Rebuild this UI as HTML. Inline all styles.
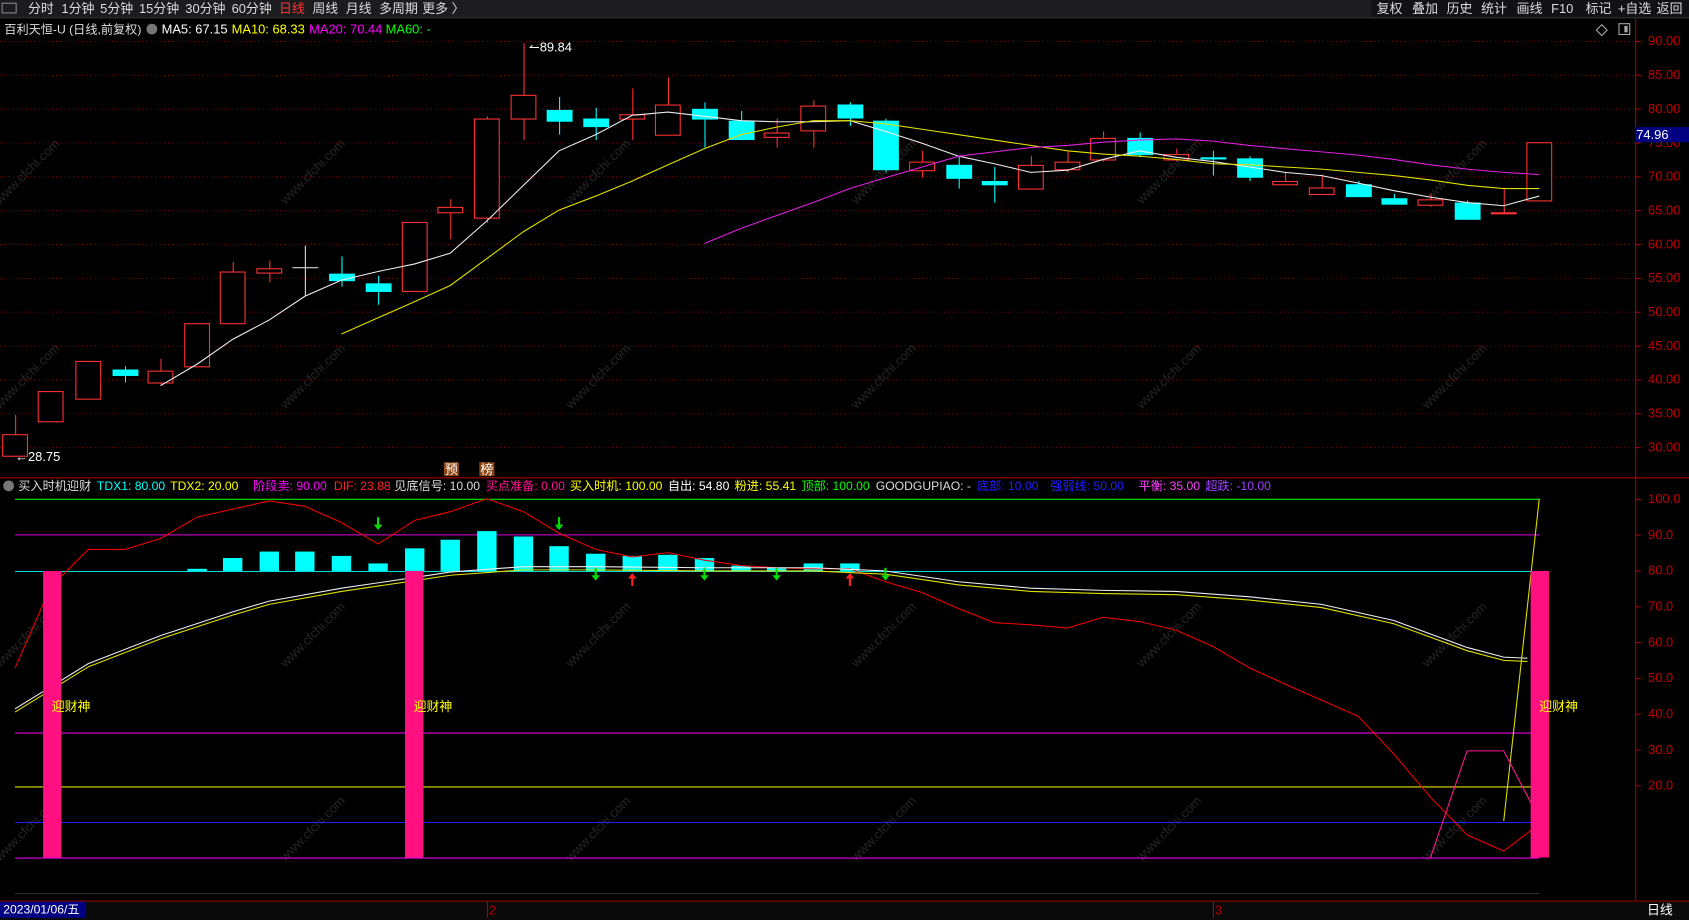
<!DOCTYPE html>
<html><head><meta charset="utf-8"><style>
html,body{margin:0;padding:0;background:#000;overflow:hidden}
svg{display:block}
text{font-family:"Liberation Sans","Noto Sans CJK SC",sans-serif;font-size:12px}
.s{font-size:11.3px}
</style></head><body>
<svg id="s" width="1689" height="920" viewBox="0 0 1568 854" preserveAspectRatio="none" xmlns="http://www.w3.org/2000/svg">
<rect width="1568" height="854" fill="#000"/>
<g id="wm" fill="#262626" font-size="22"></g>
<!-- top bar -->
<rect x="0" y="0" width="1568" height="16" fill="#1c1c1e"/>
<rect x="1273" y="0" width="295" height="16" fill="#121214"/>
<line x1="0" y1="16.5" x2="1568" y2="16.5" stroke="#333"/>
<rect x="2" y="3" width="13" height="9" fill="none" stroke="#888"/>
<g fill="#ddd">
<text x="26" y="12">分时</text><text x="57" y="12">1分钟</text><text x="93" y="12">5分钟</text><text x="129" y="12">15分钟</text><text x="172" y="12">30分钟</text><text x="215" y="12">60分钟</text>
<text x="259" y="12" fill="#ff3333">日线</text><text x="290" y="12">周线</text><text x="321" y="12">月线</text><text x="352" y="12">多周期</text><text x="392" y="12">更多 〉</text>
<text x="1278" y="12">复权</text><text x="1311" y="12">叠加</text><text x="1343" y="12">历史</text><text x="1375" y="12">统计</text><text x="1408" y="12">画线</text><text x="1440" y="12">F10</text><text x="1472" y="12">标记</text><text x="1502" y="12">+自选</text><text x="1538" y="12">返回</text>
</g>
<!-- right axis -->
<line x1="1518.5" y1="17" x2="1518.5" y2="836" stroke="#a00"/>
<line x1="0" y1="443.5" x2="1568" y2="443.5" stroke="#a00"/>
<line x1="0" y1="836.5" x2="1568" y2="836.5" stroke="#a00"/>
<g id="grid"></g>
<rect x="1518" y="118" width="50" height="14" fill="#000080"/>
<text x="1519" y="129" fill="#fff">74.96</text>
<path d="M1487 23l5 5-5 5-5-5z" fill="none" stroke="#aaa"/>
<rect x="1503" y="22" width="10" height="10" fill="none" stroke="#aaa"/><rect x="1508" y="24" width="3" height="6" fill="#aaa"/>
<!-- header -->
<text x="4" y="31" fill="#ddd" class="s">百利天恒-U (日线,前复权)</text>
<circle cx="141" cy="27" r="5" fill="#777"/>
<text x="150" y="31" fill="#fff">MA5: 67.15</text><text x="215" y="31" fill="#ffff00">MA10: 68.33</text><text x="287" y="31" fill="#ff00ff">MA20: 70.44</text><text x="358" y="31" fill="#00ff00">MA60: -</text>
<text x="491" y="48" fill="#fff">↼89.84</text>
<text x="14" y="428" fill="#fff">←28.75</text>
<rect x="412" y="429" width="14" height="13" fill="#8b4513"/><text x="413" y="440" fill="#fff">预</text>
<rect x="445" y="429" width="14" height="13" fill="#8b4513"/><text x="446" y="440" fill="#fff">榜</text>
<circle cx="8" cy="451" r="5" fill="#777"/>
<g class="s">
<text x="17" y="455" fill="#ddd" class="s">买入时机迎财</text><text x="90" y="455" fill="#00ffff" class="s">TDX1: 80.00</text><text x="158" y="455" fill="#ffff00" class="s">TDX2: 20.00</text>
<text x="235" y="455" fill="#ff00ff" class="s">阶段卖: 90.00</text><text x="310" y="455" fill="#ff2020" class="s">DIF: 23.88</text><text x="366" y="455" fill="#ddd" class="s">见底信号: 10.00</text>
<text x="451" y="455" fill="#ff1493" class="s">买点准备: 0.00</text><text x="529" y="455" fill="#ffff00" class="s">买入时机: 100.00</text><text x="620" y="455" fill="#fff" class="s">自出: 54.80</text><text x="682" y="455" fill="#ffff00" class="s">粉进: 55.41</text>
<text x="744" y="455" fill="#00ff00" class="s">顶部: 100.00</text><text x="813" y="455" fill="#ddd" class="s">GOODGUPIAO: -</text><text x="907" y="455" fill="#2020ff" class="s">底部: 10.00</text><text x="975" y="455" fill="#2020ff" class="s">强弱线: 50.00</text><text x="1057" y="455" fill="#ff40ff" class="s">平衡: 35.00</text><text x="1119" y="455" fill="#a040ff" class="s">超跌: -10.00</text>
</g>
<g id="main"></g>
<!-- bottom bar -->
<rect x="0" y="837" width="1568" height="17" fill="#0a0a0a"/>
<rect x="0" y="837" width="80" height="15" fill="#000080"/>
<text x="3" y="848" fill="#fff" class="s">2023/01/06/五</text>
<line x1="452.5" y1="837" x2="452.5" y2="852" stroke="#a00"/><text x="454" y="849" fill="#a00" font-size="10">2</text>
<line x1="1126.5" y1="837" x2="1126.5" y2="852" stroke="#a00"/><text x="1128" y="849" fill="#a00" font-size="10">3</text>
<text x="1529" y="849" fill="#fff">日线</text>
</svg>
<script>
var S='http://www.w3.org/2000/svg',g=document.getElementById('main'),gr=document.getElementById('grid'),wm=document.getElementById('wm');
function el(p,t,a,txt){var e=document.createElementNS(S,t);for(var k in a)e.setAttribute(k,a[k]);if(txt)e.textContent=txt;p.appendChild(e);return e}
[[0,190],[265,190],[530,190],[795,190],[1060,190],[1325,190],[0,380],[265,380],[530,380],[795,380],[1060,380],[1325,380],[0,620],[265,620],[530,620],[795,620],[1060,620],[1325,620],[0,800],[265,800],[530,800],[795,800],[1060,800],[1325,800]].forEach(function(p){el(wm,'text',{x:p[0],y:p[1],transform:'rotate(-45 '+p[0]+' '+p[1]+')','font-size':22},'www.cfchi.com')});
function py(p){return 38+(90-p)*6.283}
for(var p=90;p>=30;p-=5){var y=py(p);el(gr,'line',{x1:0,y1:y+.5,x2:1518,y2:y+.5,stroke:'#8b0000','stroke-dasharray':'1 3'});el(gr,'line',{x1:1518,y1:y+.5,x2:1523,y2:y+.5,stroke:'#a00'});el(gr,'text',{x:1530,y:y+4,fill:'#c00000'},p.toFixed(2));}
function iy(v){return 463+(100-v)*3.325}
for(var v=100;v>=20;v-=10){var y=iy(v);el(gr,'line',{x1:1518,y1:y+.5,x2:1523,y2:y+.5,stroke:'#a00'});el(gr,'text',{x:1530,y:y+4,fill:'#c00000'},v.toFixed(1));}
var C=[[14,403,423,385,423,'r'],[47,363,391,363,391,'r'],[82,335,370,335,370,'r'],[116,343,349,340,355,'c'],[149,344,355,333,357,'r'],[183,300,340,300,340,'r'],[216,252,300,243,300,'r'],[250,249,253,242,262,'r'],[283,248,249,228,275,'w'],[317,254,261,238,266,'c'],[351,263,271,256,283,'c'],[385,206,270,206,270,'r'],[418,192,197,185,222,'r'],[452,110,202,108,207,'r'],[486,88,110,40,130,'r'],[519,102,113,90,125,'c'],[553,110,118,100,130,'c'],[587,106,110,82,130,'r'],[620,97,125,72,125,'r'],[654,101,111,95,137,'c'],[688,112,130,103,130,'c'],[721,123,127,110,137,'r'],[755,98,121,93,137,'r'],[789,97,110,95,117,'c'],[822,112,158,110,160,'c'],[856,150,158,140,165,'r'],[890,153,166,145,175,'c'],[923,168,172,155,188,'c'],[957,153,175,145,175,'r'],[991,150,157,140,160,'r'],[1024,128,148,122,150,'r'],[1058,128,144,123,146,'c'],[1092,143,148,138,150,'r'],[1126,146,148,140,163,'c'],[1160,147,165,145,168,'c'],[1193,168,171,160,172,'r'],[1227,174,180,162,180,'r'],[1261,171,183,168,183,'c'],[1294,184,190,180,190,'c'],[1328,185,190,180,192,'r'],[1362,188,204,186,204,'c'],[1396,197,198,175,198,'r'],[1429,132,186,132,186,'r']];
C.forEach(function(c){var col=c[5]=='r'?'#ff3232':c[5]=='c'?'#00ffff':'#ddd';
el(g,'line',{x1:c[0]+.5,y1:c[3],x2:c[0]+.5,y2:c[4],stroke:col});
if(c[5]=='r')el(g,'rect',{x:c[0]-11.5,y:c[1]+.5,width:23,height:Math.max(1,c[2]-c[1]),fill:'#000',stroke:col});
else el(g,'rect',{x:c[0]-11.5,y:c[1],width:24,height:Math.max(1,c[2]-c[1]),fill:col});});
function pl(pts,col,w){el(g,'polyline',{points:pts.map(function(a){return a.join(',')}).join(' '),fill:'none',stroke:col,'stroke-width':w||1})}
pl([[149,358],[183,338],[216,315],[250,297],[283,275],[317,260],[351,252],[385,245],[418,235],[452,205],[486,172],[519,140],[553,125],[587,107],[620,104],[654,108],[688,112],[721,113],[755,113],[789,112],[822,122],[856,133],[890,145],[923,152],[957,160],[991,158],[1024,148],[1058,140],[1092,146],[1126,150],[1160,155],[1193,160],[1227,163],[1261,170],[1294,177],[1328,183],[1362,188],[1396,191],[1429,182]],'#eee');
pl([[317,310],[351,295],[385,280],[418,265],[452,240],[486,215],[519,195],[553,182],[587,168],[620,153],[654,138],[688,125],[721,118],[755,112],[789,112],[822,115],[856,120],[890,125],[923,130],[957,135],[991,140],[1024,143],[1058,145],[1092,148],[1126,152],[1160,153],[1193,155],[1227,157],[1261,160],[1294,163],[1328,167],[1362,172],[1396,175],[1429,175]],'#e0e000');
pl([[654,226],[688,212],[721,200],[755,188],[789,175],[822,165],[856,155],[890,145],[923,141],[957,137],[991,135],[1024,132],[1058,130],[1092,129],[1126,131],[1160,135],[1193,138],[1227,141],[1261,144],[1294,148],[1328,153],[1362,157],[1396,160],[1429,162]],'#e020e0');
[[463,'#00ee00'],[496,'#e000e0'],[530,'#00e0e0'],[680,'#e000e0'],[730,'#e0e000'],[763,'#2020ff'],[796,'#e000e0'],[829,'#333']].forEach(function(h){el(g,'line',{x1:14,y1:h[0]+.5,x2:1429,y2:h[0]+.5,stroke:h[1]})});
[[183,528],[216,518],[250,512],[283,512],[317,516],[351,523],[385,509],[418,501],[452,493],[486,498],[519,507],[553,514],[587,516],[620,515],[654,518],[688,525],[721,527],[755,523],[789,523]].forEach(function(b){el(g,'rect',{x:b[0]-9,y:b[1],width:18,height:530-b[1],fill:'#00ffff'})});
pl([[14,620],[47,545],[82,510],[116,510],[149,500],[183,480],[250,465],[283,470],[317,485],[351,505],[385,483],[418,475],[452,463],[486,475],[519,495],[553,510],[587,517],[620,513],[654,520],[688,525],[721,527],[755,528],[789,528],[822,540],[856,550],[890,565],[923,578],[957,580],[991,583],[1024,573],[1058,577],[1092,585],[1126,600],[1160,620],[1193,635],[1227,650],[1261,665],[1294,700],[1328,740],[1362,775],[1396,790],[1429,765]],'#ee0000');
var W=[[14,658],[82,616],[149,590],[216,568],[250,558],[317,546],[385,536],[418,531],[486,526],[553,526],[654,527],[755,527],[822,530],[890,540],[957,546],[1024,548],[1092,549],[1160,554],[1227,561],[1294,576],[1362,601],[1396,610],[1418,611]];
pl(W.map(function(a){return [a[0],a[1]+3]}),'#e0e000');pl(W,'#eee');
pl([[1396,762],[1429,463]],'#e0e000');
pl([[1328,796],[1362,697],[1396,697],[1429,760]],'#ff1493');
[[40],[376],[1421]].forEach(function(b){el(g,'rect',{x:b[0],y:530,width:17,height:266,fill:'#ff1080'})});
[[48,660],[384,660],[1429,660]].forEach(function(t){el(g,'text',{x:t[0],y:t[1],fill:'#ffff00','font-size':11},'迎财神')});
function arr(x,y,down,col){var d=down?'M'+x+' '+(y+8)+'l-4-5h3v-7h2v7h3z':'M'+x+' '+(y-8)+'l-4 5h3v7h2v-7h3z';el(g,'path',{d:d,fill:col})}
arr(351,484,1,'#00dd00');arr(519,484,1,'#00dd00');
[553,654,721,822].forEach(function(x){arr(x,531,1,'#00dd00')});
arr(587,540,0,'#ff2020');arr(789,540,0,'#ff2020');
</script>
</body></html>
